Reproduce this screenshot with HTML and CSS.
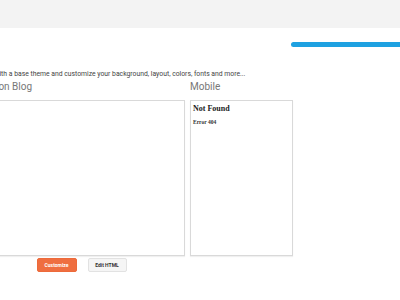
FILE: index.html
```html
<!DOCTYPE html>
<html lang="en">
<head>
    <meta charset="UTF-8">
    <title>Theme</title>
    <link rel="stylesheet" href="styles.css">
</head>
<body>
    <div class="topbar"></div>

    <div class="progress">
        <div class="progress-bar"></div>
    </div>

    <div class="theme">
        <p class="intro">Start with a base theme and customize your background, layout, colors, fonts and more...</p>

        <div class="previews">
            <div class="preview live">
                <h2>Live on Blog</h2>
                <div class="frame"></div>
                <div class="actions">
                    <button class="btn btn-primary">Customize</button>
                    <button class="btn">Edit HTML</button>
                </div>
            </div>

            <div class="preview mobile">
                <h2>Mobile</h2>
                <div class="frame">
                    <h1 class="nf-title">Not Found</h1>
                    <p class="nf-text">Error 404</p>
                </div>
            </div>
        </div>
    </div>
</body>
</html>
```

FILE: styles.css
```css
body { margin: 0; background: #fff; font-family: Roboto, Arial, sans-serif; overflow: hidden; width: 400px; height: 300px; }
.topbar { height: 28px; background: #f3f3f3; }
.progress { display: flex; justify-content: flex-end; padding-top: 14px; margin-right: -10px; }
.progress-bar { width: 119px; height: 5px; border-radius: 3px; background: #1ea1e1; }
.theme { margin-left: -22px; }
.intro { margin: 22px 0 0; font-size: 6.8px; line-height: 10px; color: #444; }
.previews { display: flex; gap: 5px; }
.preview h2 { margin: 0; font-size: 10px; font-weight: 400; line-height: 16px; color: #777; }
.preview .frame { box-sizing: border-box; margin-top: 5px; height: 156px; border: 1px solid #d9d9d9; box-shadow: 0 1px 1px rgba(0,0,0,0.06); }
.live { width: 207px; }
.mobile { width: 103px; }
.mobile .frame { padding: 3px 2px; }
.nf-title { margin: 0; font-family: "Liberation Serif", serif; font-size: 8px; font-weight: bold; color: #222; }
.nf-text { margin: 6px 0 0; font-family: "Liberation Serif", serif; font-size: 5.5px; font-weight: bold; color: #333; }
.actions { display: flex; justify-content: center; gap: 11px; margin-top: 2px; }
.btn { width: 39px; height: 14px; padding: 0; border: 1px solid #e2e2e2; border-radius: 2px; background: #f5f5f5; color: #333; font-family: Roboto, Arial, sans-serif; font-size: 5px; font-weight: bold; }
.btn-primary { width: 40px; border-color: #ed6a3a; background: #ef6e40; color: #fff; }
```
